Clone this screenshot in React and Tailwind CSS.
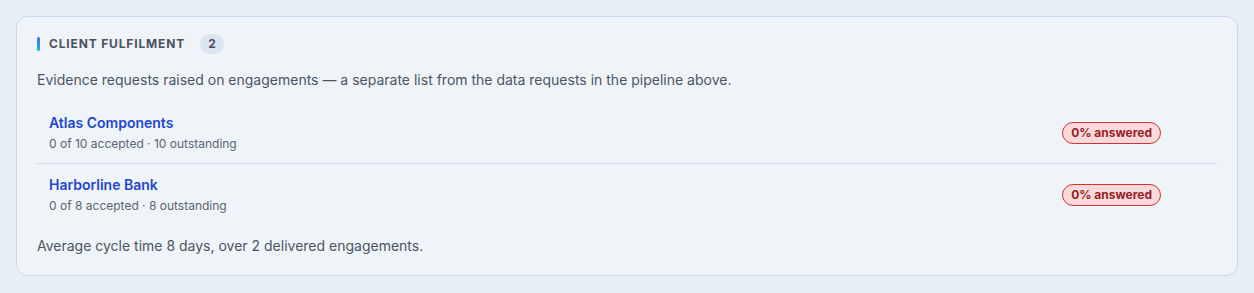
const rows = [
  { name: 'Atlas Components', accepted: 0, total: 10 },
  { name: 'Harborline Bank', accepted: 0, total: 8 },
];

function AnsweredBadge({ pct }) {
  return (
    <span className="rounded-full border border-[#dc2f2f] bg-[#f8dadd] px-2 py-[2px] text-xs leading-4 font-bold text-[#9b1c1c]">
      {pct}% answered
    </span>
  );
}

export default function App() {
  return (
    <div className="min-h-[293px] bg-[#e8eef6] p-4 font-['Inter',sans-serif]">
      <section className="rounded-xl border border-[#c8d7e8] bg-[#eff4f9] px-5 pt-[17px] pb-[19px]">
        <h2 className="flex h-5 items-center">
          <span className="mr-[9px] h-[14px] w-[3px] rounded-full bg-gradient-to-b from-[#3b6ff0] to-[#14b8d6]" />
          <span className="text-xs font-bold tracking-[0.07em] text-[#4a5260]">CLIENT FULFILMENT</span>
          <span className="ml-[15px] flex h-5 w-6 items-center justify-center rounded-full bg-[#dbe5f0] text-xs font-bold text-[#4a5260]">
            2
          </span>
        </h2>
        <p className="mt-4 text-sm leading-5 text-[#4b5563]">
          Evidence requests raised on engagements — a separate list from the data requests in the pipeline above.
        </p>
        <ul className="mt-3 divide-y divide-[#cbd7e5]">
          {rows.map((r) => (
            <li key={r.name} className="flex items-center justify-between py-[11px] pr-14 pl-3">
              <div>
                <div className="text-sm leading-5 font-semibold text-[#1f47d1]">{r.name}</div>
                <div className="mt-[3px] text-xs leading-4 text-[#5b6472]">
                  {r.accepted} of {r.total} accepted · {r.total - r.accepted} outstanding
                </div>
              </div>
              <AnsweredBadge pct={0} />
            </li>
          ))}
        </ul>
        <p className="mt-[11px] text-sm leading-5 text-[#4b5563]">
          Average cycle time 8 days, over 2 delivered engagements.
        </p>
      </section>
    </div>
  );
}
